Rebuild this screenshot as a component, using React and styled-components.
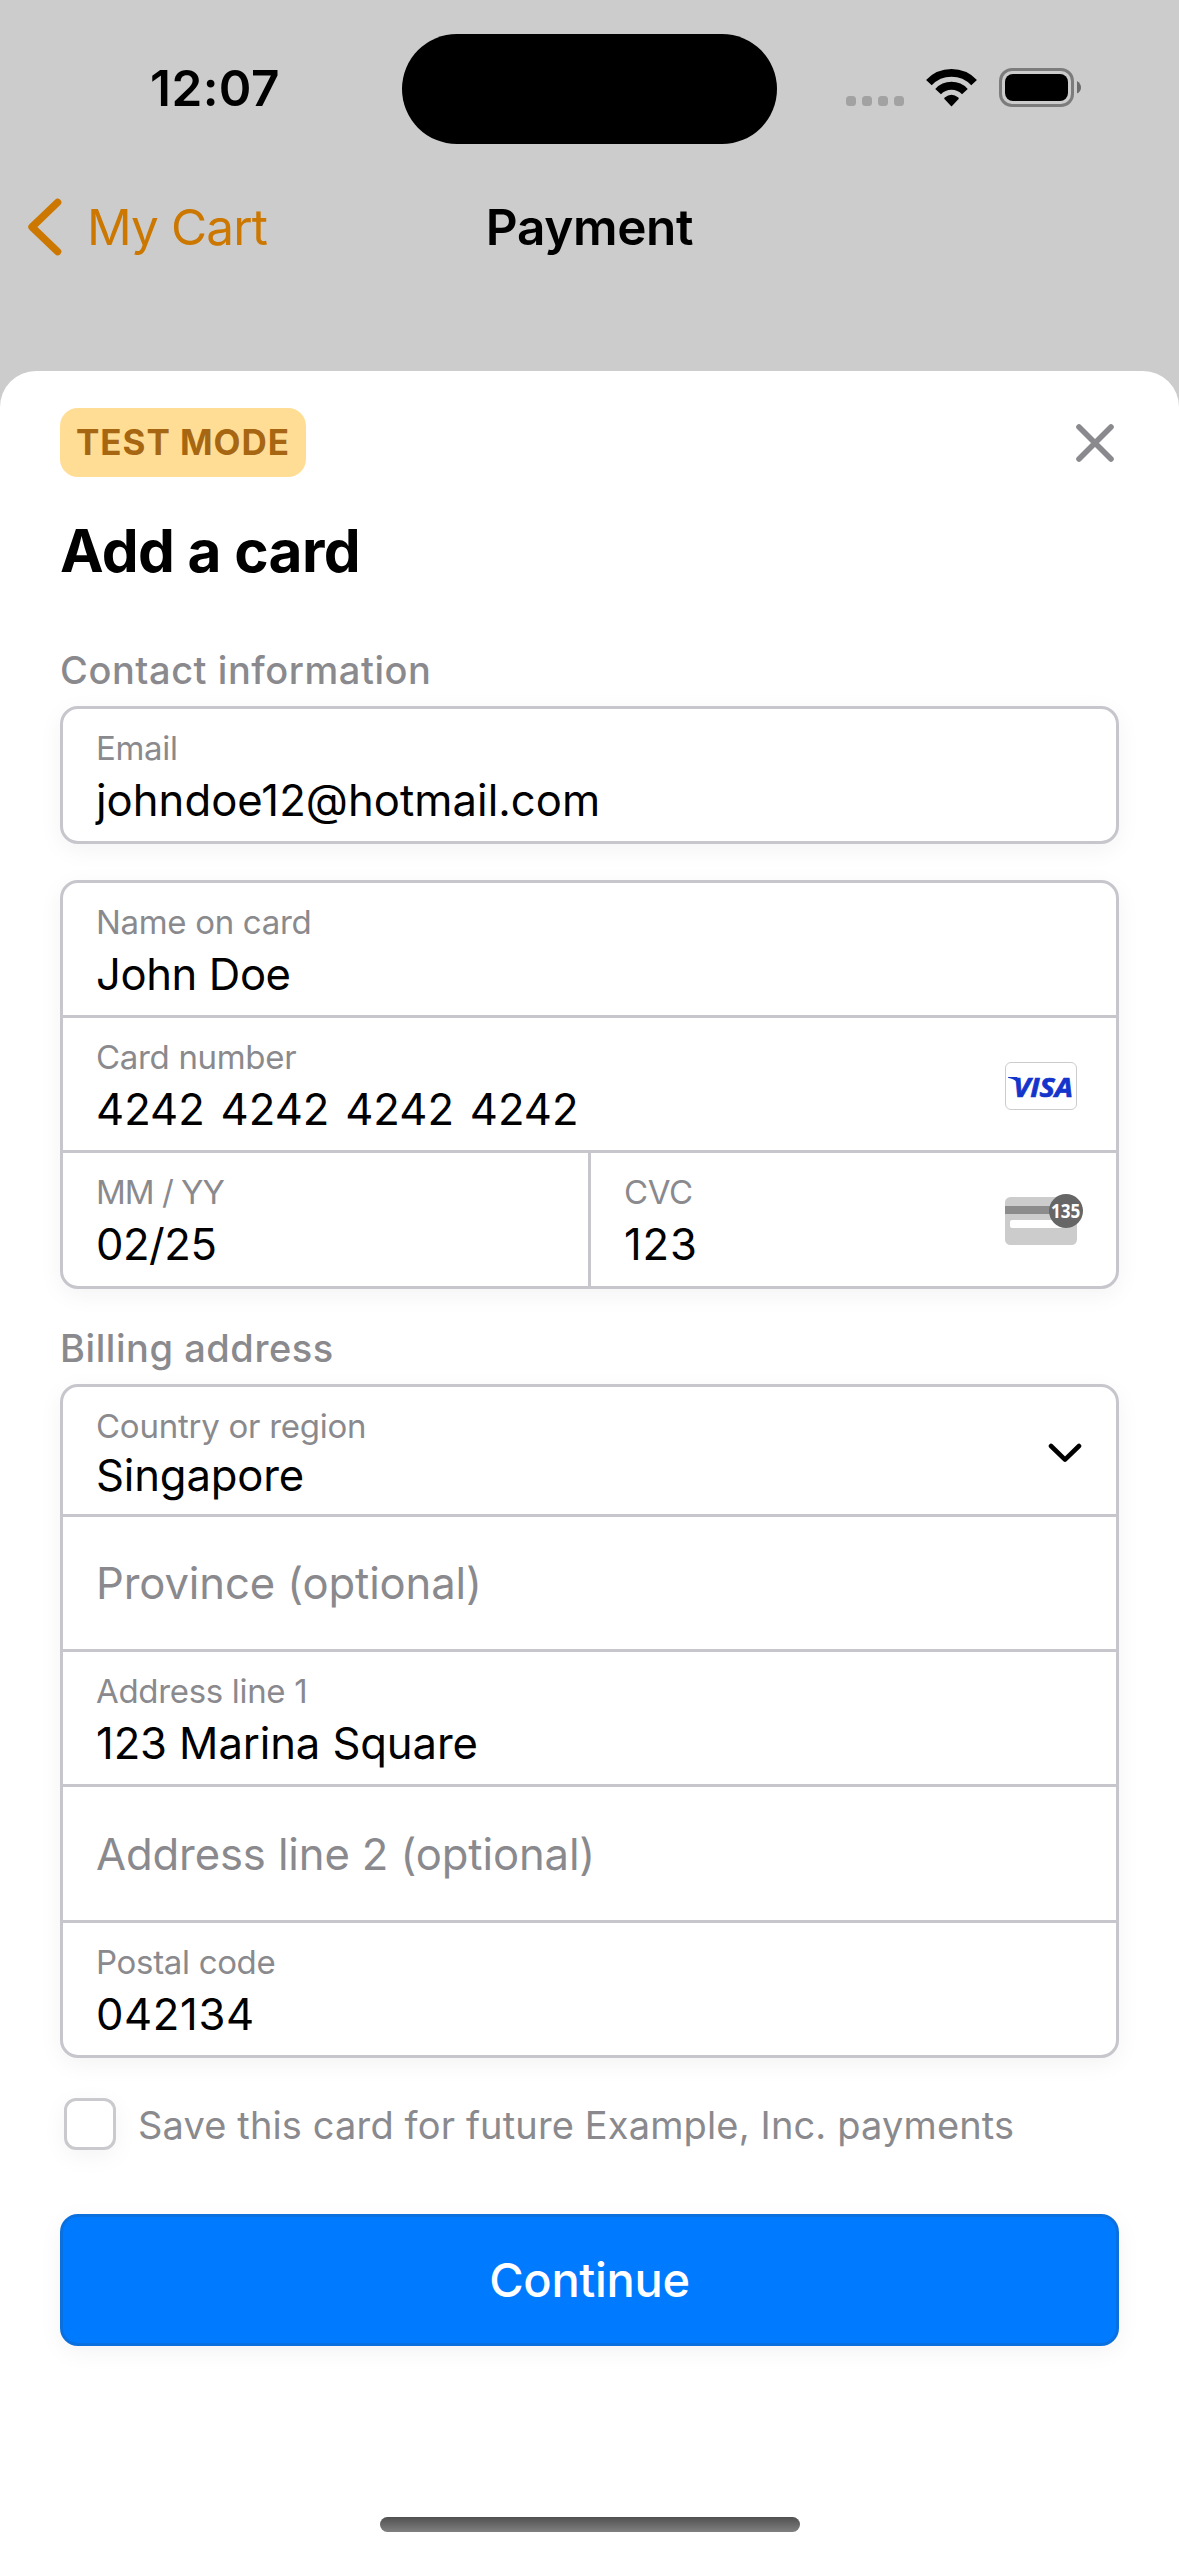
import React from "react";
import styled, { createGlobalStyle } from "styled-components";

const GlobalStyle = createGlobalStyle`
  *, *::before, *::after { box-sizing: border-box; }
  body {
    margin: 0;
    background: #cccccc;
    font-family: Inter, "Liberation Sans", sans-serif;
    color: #000;
  }
`;

const Screen = styled.div`
  width: 1179px;
  height: 2556px;
  display: flex;
  flex-direction: column;
  background: #cccccc;
  overflow: hidden;
`;

const StatusBar = styled.div`
  display: grid;
  grid-template-columns: 402px 375px 402px;
  align-items: center;
  height: 144px;
  padding-top: 34px;
  flex: none;
`;

const Clock = styled.div`
  padding: 0 0 2px 28px;
  text-align: center;
  font-size: 49.5px;
  line-height: 60px;
  font-weight: 600;
  letter-spacing: 0.4px;
`;

const Island = styled.div`
  height: 110px;
  border-radius: 55px;
  background: #000;
`;

const Indicators = styled.div`
  display: flex;
  align-items: center;
  padding: 0 0 3px 69px;
`;

const SignalDots = styled.div`
  display: flex;
  gap: 6px;
  padding-top: 27px;
  margin-right: 22px;
`;

const Dot = styled.span`
  width: 10px;
  height: 10px;
  border-radius: 3.5px;
  background: #a2a2a2;
`;

const WifiIcon = styled.svg`
  width: 51px;
  height: 38px;
  margin-right: 22px;
`;

const BatteryIcon = styled.svg`
  width: 82px;
  height: 39px;
`;

const NavBar = styled.div`
  display: grid;
  grid-template-columns: 1fr auto 1fr;
  align-items: center;
  height: 227px;
  padding: 50px 28px 111px;
  flex: none;
`;

const BackButton = styled.button`
  display: flex;
  align-items: center;
  gap: 25px;
  padding: 0;
  border: 0;
  background: none;
  color: #cc7700;
  font: 400 49.5px/66px Inter, "Liberation Sans", sans-serif;
  letter-spacing: -0.9px;
`;

const BackIcon = styled.svg`
  width: 34px;
  height: 58px;
`;

const NavTitle = styled.h1`
  margin: 0;
  font-size: 49.5px;
  line-height: 66px;
  font-weight: 600;
  letter-spacing: -0.35px;
`;

const Sheet = styled.main`
  display: flex;
  flex-direction: column;
  flex: 1;
  padding: 37px 60px 0;
  border-radius: 36px 36px 0 0;
  background: #fff;
`;

const SheetHeader = styled.div`
  display: flex;
  align-items: center;
  justify-content: space-between;
  height: 69px;
  padding-right: 4px;
`;

const Badge = styled.span`
  display: flex;
  align-items: center;
  justify-content: center;
  width: 246px;
  height: 69px;
  padding-bottom: 1px;
  border-radius: 18px;
  background: #ffdd94;
  color: #a76611;
  font-size: 35px;
  line-height: 42px;
  font-weight: 700;
  letter-spacing: 0.95px;
`;

const CloseIcon = styled.svg`
  width: 40px;
  height: 40px;
`;

const Title = styled.h2`
  margin: 37px 0 0;
  font-size: 58.5px;
  line-height: 74px;
  font-weight: 700;
  letter-spacing: -0.6px;
`;

const SectionLabel = styled.h3`
  margin: ${(p) => p.$top}px 0 ${(p) => p.$bottom}px;
  color: #8a8a8e;
  font-size: 38px;
  line-height: 46px;
  font-weight: 500;
  letter-spacing: 0.55px;
`;

const Group = styled.div`
  display: flex;
  flex-direction: column;
  margin-bottom: ${(p) => p.$gap || 0}px;
  border: 3px solid #c6c6cc;
  border-radius: 18px;
  background: #fff;
  box-shadow: 0 6px 24px rgba(0, 0, 0, 0.05);
`;

const Row = styled.div`
  display: flex;
  height: ${(p) => p.$h}px;
  & + & {
    border-top: 3px solid #c6c6cc;
  }
`;

const Cell = styled.div`
  display: flex;
  align-items: center;
  justify-content: space-between;
  flex: ${(p) => (p.$w ? "none" : "1")};
  width: ${(p) => (p.$w ? `${p.$w}px` : "auto")};
  padding: 0 ${(p) => p.$right || 0}px 0 33px;
  & + & {
    border-left: 3px solid #c6c6cc;
  }
`;

const FieldText = styled.div`
  display: flex;
  flex-direction: column;
  align-self: flex-start;
  gap: ${(p) => (p.$tight ? 3 : 6)}px;
  padding-top: 19px;
`;

const FieldLabel = styled.span`
  color: #8a8a8e;
  font-size: 33px;
  line-height: 40px;
  letter-spacing: ${(p) => p.$ls}px;
  white-space: nowrap;
`;

const FieldValue = styled.span`
  font-size: 43.6px;
  line-height: 54px;
  letter-spacing: ${(p) => p.$ls}px;
  word-spacing: ${(p) => p.$ws}px;
  white-space: nowrap;
`;

const Placeholder = styled.span`
  padding-top: 2px;
  color: #8a8a8e;
  font-size: 43.6px;
  line-height: 54px;
  letter-spacing: -0.12px;
`;

const CardIcon = styled.svg`
  width: 78px;
  height: 54px;
  margin-top: ${(p) => p.$top}px;
  overflow: visible;
`;

const ChevronIcon = styled.svg`
  width: 34px;
  height: 20px;
  margin-top: 4px;
`;

const SaveRow = styled.label`
  display: flex;
  align-items: center;
  gap: 22px;
  height: 52px;
  margin: 40px 0 64px 4px;
`;

const Checkbox = styled.span`
  width: 52px;
  height: 52px;
  border: 3px solid #cacace;
  border-radius: 12px;
  background: #fff;
  box-shadow: 0 6px 24px rgba(0, 0, 0, 0.05);
`;

const SaveText = styled.span`
  color: #8a8a8e;
  font-size: 38px;
  line-height: 46px;
  letter-spacing: 0.14px;
  padding-top: 2px;
  white-space: nowrap;
`;

const PrimaryButton = styled.button`
  height: 132px;
  padding: 0;
  border: 3px solid #0a70e0;
  border-radius: 18px;
  background: #007aff;
  color: #fff;
  font: 500 47px/60px Inter, "Liberation Sans", sans-serif;
  letter-spacing: -0.3px;
  box-shadow: 0 6px 24px rgba(0, 0, 0, 0.05);
`;

const HomeIndicator = styled.div`
  align-self: center;
  width: 420px;
  height: 15px;
  margin: auto 0 24px;
  border-radius: 8px;
  background: linear-gradient(#505050, #808080);
`;

function Field({ label, value, tight, labelSpacing = -0.32, valueSpacing = 0, wordSpacing = 0 }) {
  return (
    <FieldText $tight={tight}>
      <FieldLabel $ls={labelSpacing}>{label}</FieldLabel>
      <FieldValue $ls={valueSpacing} $ws={wordSpacing}>{value}</FieldValue>
    </FieldText>
  );
}

function Wifi() {
  return (
    <WifiIcon viewBox="0 0 51 38">
      <g fill="none" stroke="#000" strokeWidth="7.8">
        <path d="M2.9 13.6 A31.2 31.2 0 0 1 48.1 13.6" />
        <path d="M12.1 22.6 A18.3 18.3 0 0 1 38.9 22.6" />
      </g>
      <path d="M25.5 37.4 L18.4 30.1 Q17.9 29.3 18.7 28.5 Q25.5 22.8 32.3 28.5 Q33.1 29.3 32.6 30.1 Z" />
    </WifiIcon>
  );
}

function Battery() {
  return (
    <BatteryIcon viewBox="0 0 82 39">
      <rect x="1.5" y="1.5" width="72" height="36" rx="11.5" fill="none" stroke="#7c7c7c" strokeWidth="3" />
      <rect x="6" y="6" width="63" height="27" rx="8" />
      <path d="M78 13 Q82 15.5 82 19.5 Q82 23.5 78 25.5 Z" fill="#6c6c6c" />
    </BatteryIcon>
  );
}

function Visa() {
  return (
    <CardIcon $top={4} viewBox="0 0 78 54">
      <rect x="0.5" y="3.5" width="71" height="47" rx="5.5" fill="#fff" stroke="#cccccc" />
      <path d="M3 18 H11.5 Q13 18.2 13.6 20.5 L15 26 Q10.5 20 3 18.7 Z" fill="#1434cb" />
      <text
        x="8.2"
        y="37.5"
        fill="#1434cb"
        stroke="#1434cb"
        strokeWidth="0.7"
        fontFamily='"Open Sans", "Noto Sans", sans-serif'
        fontSize="26.8"
        fontWeight="700"
        fontStyle="italic"
        textLength="59.6"
        lengthAdjust="spacingAndGlyphs"
      >
        VISA
      </text>
    </CardIcon>
  );
}

function CvcCard() {
  return (
    <CardIcon $top={2} viewBox="0 0 78 54">
      <rect x="0" y="3" width="72" height="48" rx="5.5" fill="#cccccc" />
      <rect x="0" y="12" width="72" height="8" fill="#8c8c8c" />
      <rect x="5" y="26" width="60" height="8" rx="2" fill="#fff" />
      <circle cx="61" cy="17" r="17" fill="#666" />
      <text
        x="46"
        y="24.3"
        fill="#fff"
        fontFamily='"Noto Sans", "Open Sans", sans-serif'
        fontSize="20.2"
        fontWeight="700"
        textLength="29.4"
        lengthAdjust="spacingAndGlyphs"
      >
        135
      </text>
    </CardIcon>
  );
}

export default function App() {
  return (
    <>
      <GlobalStyle />
      <Screen>
        <StatusBar>
          <Clock>12:07</Clock>
          <Island />
          <Indicators>
            <SignalDots>
              <Dot />
              <Dot />
              <Dot />
              <Dot />
            </SignalDots>
            <Wifi />
            <Battery />
          </Indicators>
        </StatusBar>

        <NavBar>
          <BackButton>
            <BackIcon viewBox="0 0 34 58">
              <path d="M29.6 4.4 L4 29 L29.6 53.6" fill="none" stroke="#cc7700" strokeWidth="7.4" strokeLinecap="round" strokeLinejoin="round" />
            </BackIcon>
            My Cart
          </BackButton>
          <NavTitle>Payment</NavTitle>
        </NavBar>

        <Sheet>
          <SheetHeader>
            <Badge>TEST MODE</Badge>
            <CloseIcon viewBox="0 0 40 40">
              <path d="M4 4 L36 36 M36 4 L4 36" fill="none" stroke="#8a8a8e" strokeWidth="5.6" strokeLinecap="round" />
            </CloseIcon>
          </SheetHeader>

          <Title>Add a card</Title>

          <SectionLabel $top={59} $bottom={13}>Contact information</SectionLabel>
          <Group $gap={36}>
            <Row $h={132}>
              <Cell>
                <Field label="Email" value="johndoe12@hotmail.com" valueSpacing={0.05} />
              </Cell>
            </Row>
          </Group>

          <Group>
            <Row $h={132}>
              <Cell>
                <Field label="Name on card" value="John Doe" valueSpacing={-0.4} />
              </Cell>
            </Row>
            <Row $h={135}>
              <Cell $right={33}>
                <Field label="Card number" value="4242 4242 4242 4242" wordSpacing={3.5} />
                <Visa />
              </Cell>
            </Row>
            <Row $h={136}>
              <Cell $w={525}>
                <Field label="MM / YY" value="02/25" labelSpacing={-1} valueSpacing={-0.5} />
              </Cell>
              <Cell $right={33}>
                <Field label="CVC" value="123" valueSpacing={0.8} />
                <CvcCard />
              </Cell>
            </Row>
          </Group>

          <SectionLabel $top={36} $bottom={13}>Billing address</SectionLabel>
          <Group>
            <Row $h={127}>
              <Cell $right={34}>
                <Field label="Country or region" value="Singapore" tight valueSpacing={-0.15} labelSpacing={-0.25} />
                <ChevronIcon viewBox="0 0 34 20">
                  <path d="M3 3 L17 16.6 L31 3" fill="none" stroke="#000" strokeWidth="4.6" strokeLinecap="round" strokeLinejoin="round" />
                </ChevronIcon>
              </Cell>
            </Row>
            <Row $h={135}>
              <Cell>
                <Placeholder>Province (optional)</Placeholder>
              </Cell>
            </Row>
            <Row $h={135}>
              <Cell>
                <Field label="Address line 1" value="123 Marina Square" valueSpacing={-0.1} />
              </Cell>
            </Row>
            <Row $h={136}>
              <Cell>
                <Placeholder>Address line 2 (optional)</Placeholder>
              </Cell>
            </Row>
            <Row $h={135}>
              <Cell>
                <Field label="Postal code" value="042134" valueSpacing={0.6} />
              </Cell>
            </Row>
          </Group>

          <SaveRow>
            <Checkbox />
            <SaveText>Save this card for future Example, Inc. payments</SaveText>
          </SaveRow>

          <PrimaryButton>Continue</PrimaryButton>

          <HomeIndicator />
        </Sheet>
      </Screen>
    </>
  );
}
